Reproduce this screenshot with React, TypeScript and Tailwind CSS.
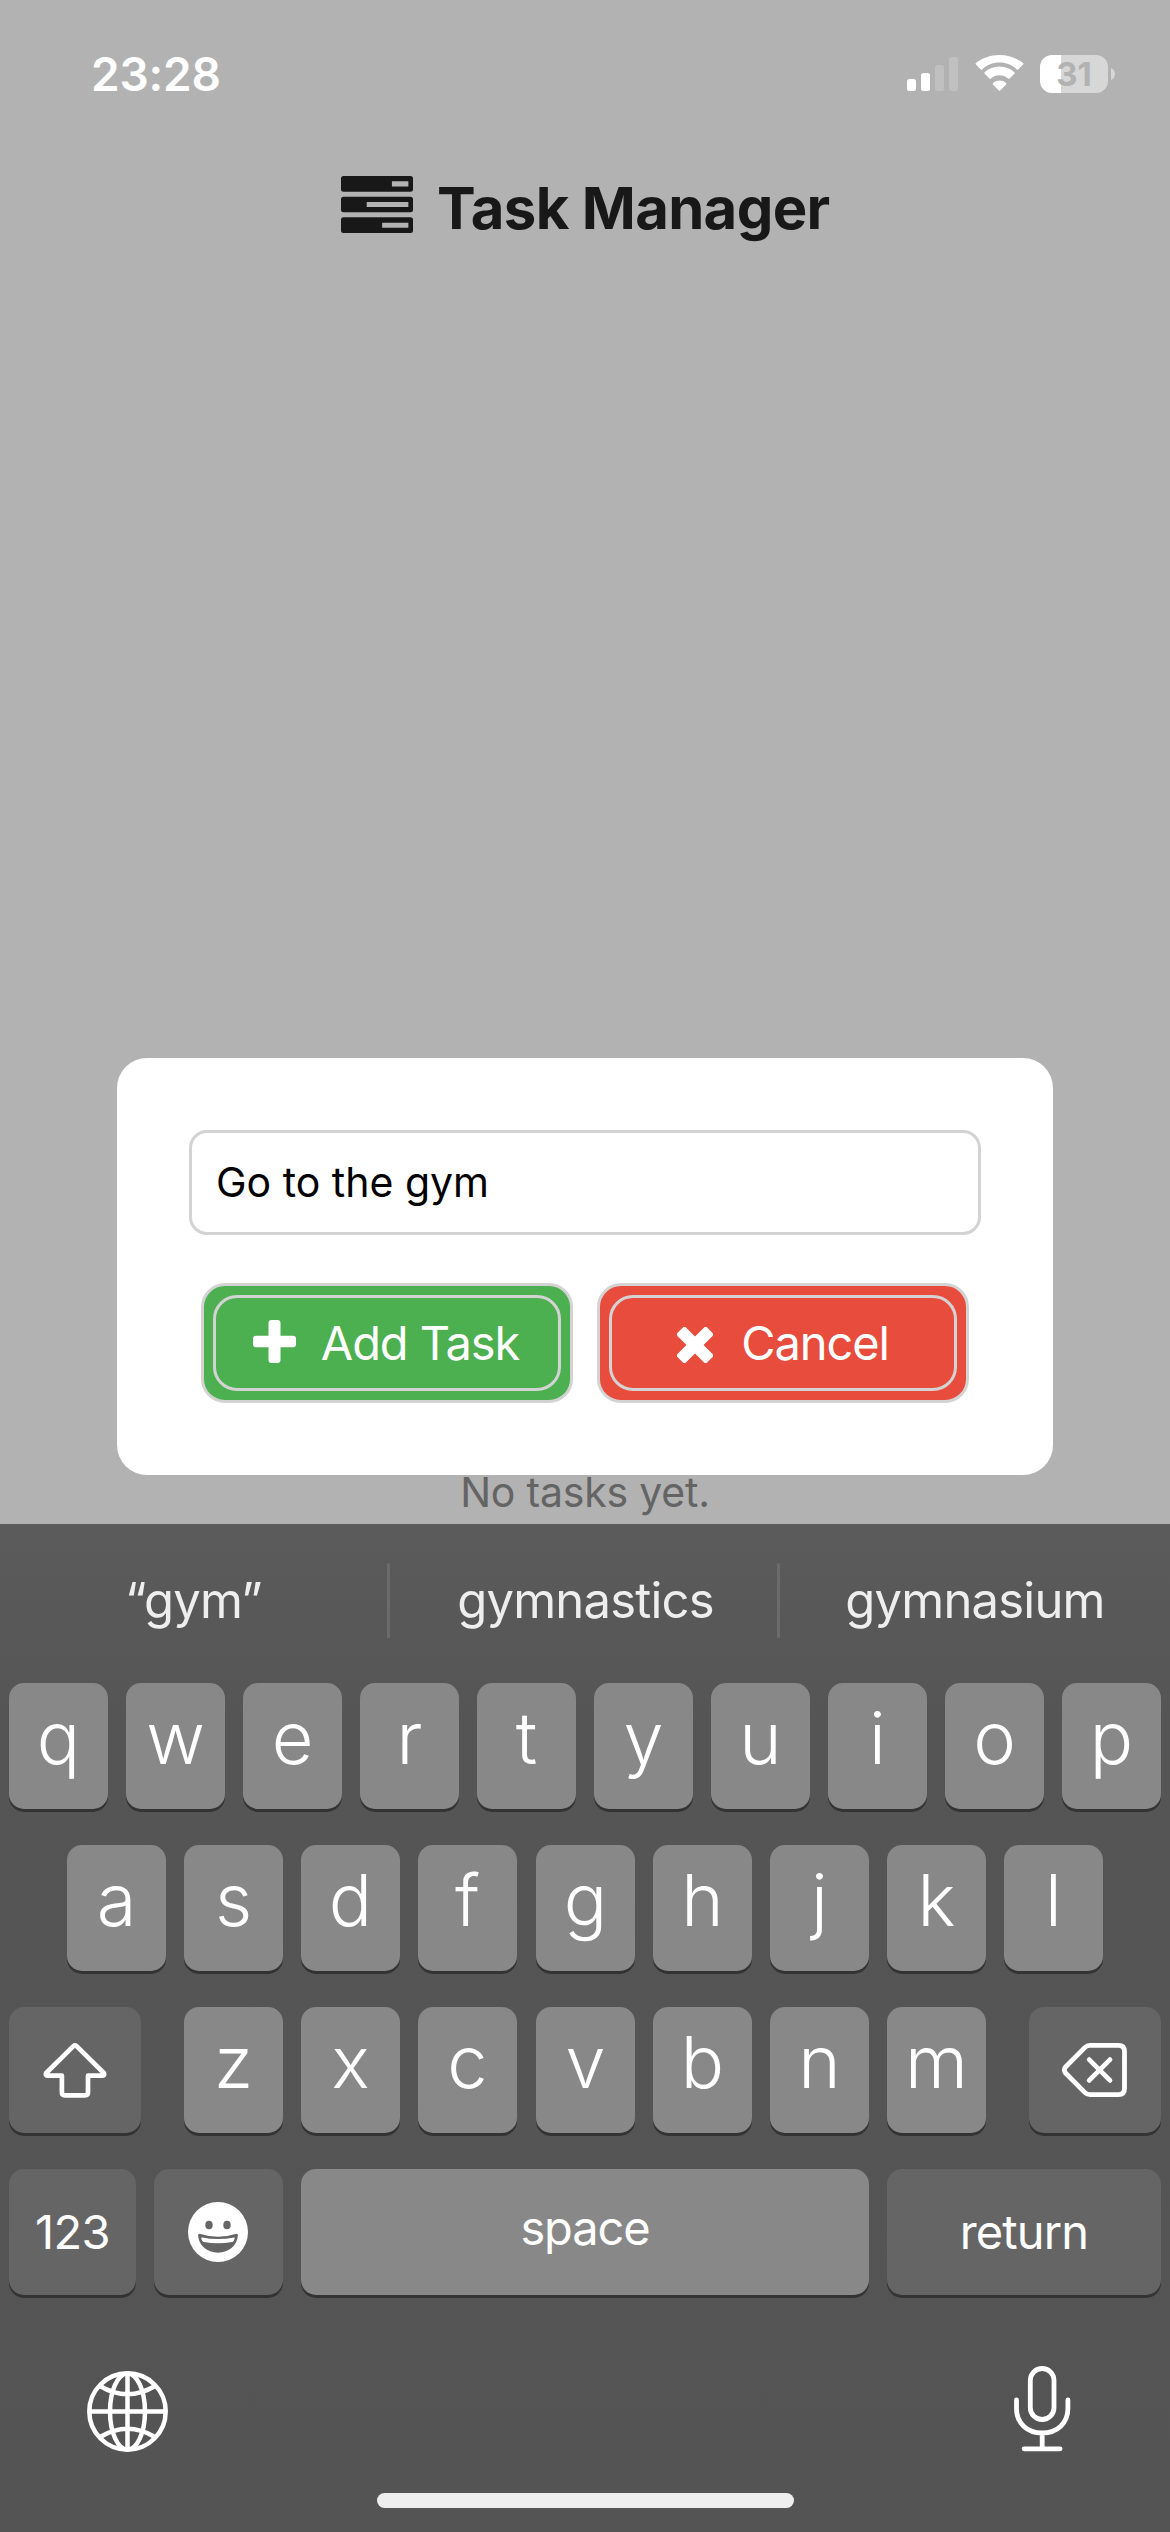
import React from "react";

const F = "font-['Inter',sans-serif]";

function T({ children, className = "" }: { children: React.ReactNode; className?: string }) {
  return <span className={"whitespace-nowrap " + className}>{children}</span>;
}

function StatusBar() {
  return (
    <div className="flex h-[141px] justify-between pl-[91px] pr-[55px] text-white">
      <T className="mt-[46px] text-[46px] leading-[56px] font-semibold tracking-[-0.2px]">23:28</T>
      <div className="mt-[55px] flex h-[38px] items-start">
        <svg width="51" height="36" viewBox="0 0 51 36" className="mr-[17px]">
          <rect x="0" y="24" width="9" height="12" rx="2.5" fill="#fff" />
          <rect x="14" y="18" width="9" height="18" rx="2.5" fill="#fff" />
          <rect x="28" y="10" width="9" height="26" rx="2.5" fill="#c0c0c0" />
          <rect x="42" y="2" width="9" height="34" rx="2.5" fill="#c0c0c0" />
        </svg>
        <svg width="49" height="36" viewBox="0 0 49 36" className="mr-[16px]" fill="#fff">
          <path d="M24.5 7.5c6.700 0 12.800 2.600 17.300 6.900c.4.4 1 .4 1.400 0l4.900-4.900c.4-.4.4-1 0-1.400C42 3.100 33.700 0 24.500 0S7 3.100.9 8.100c-.4.400-.4 1 0 1.400l4.900 4.900c.4.4 1 .4 1.400 0C11.700 10.100 17.800 7.500 24.500 7.500z" />
          <path d="M24.500 20.200c3.300 0 6.300 1.200 8.600 3.300c.4.4 1 .4 1.400 0l4.900-4.800c.4-.4.4-1.100 0-1.500c-3.900-3.600-9.200-5.700-14.900-5.700s-11 2.100-14.900 5.700c-.4.400-.4 1.100 0 1.500l4.900 4.800c.4.4 1 .4 1.400 0c2.300-2.100 5.300-3.300 8.600-3.300z" />
          <path d="M31.100 29.400c.4-.4.400-1.100 0-1.500a10.300 10.300 0 0 0-13.200 0c-.4.400-.4 1.100 0 1.500l5.900 6.200c.4.4 1 .4 1.400 0z" />
        </svg>
        <div className="flex h-[38px] w-[68px] items-center justify-center overflow-hidden rounded-[12px] bg-[linear-gradient(to_right,#fff_21px,#d7d7d7_21px)]">
          <T className="text-[33px] leading-[38px] font-bold text-[#b2b2b2]">31</T>
        </div>
        <svg width="4" height="12" viewBox="0 0 4 12" className="mt-[13px] ml-[3px]">
          <path d="M0 0c2.500 1 4 3.300 4 6s-1.500 5-4 6z" fill="#d7d7d7" />
        </svg>
      </div>
    </div>
  );
}

function Header() {
  return (
    <div className="flex h-[110px] items-start pl-[341px] text-[#181818]">
      <svg width="72" height="57" viewBox="0 0 70 57" preserveAspectRatio="none" className="mt-[35px]">
        <path
          fill="#181818"
          fillRule="evenodd"
          d="M2.500 0h65q2.500 0 2.500 2.500v10.700q0 2.500-2.500 2.500h-65q-2.500 0-2.500-2.500v-10.700q0-2.500 2.500-2.500zM49.500 5.300v5.200h16v-5.200zM2.500 20.700h65q2.500 0 2.500 2.500v10.600q0 2.500-2.500 2.500h-65q-2.500 0-2.500-2.500v-10.600q0-2.500 2.500-2.500zM25 26v5h40.500v-5zM2.500 41.300h65q2.500 0 2.500 2.500v10.700q0 2.500-2.500 2.500h-65q-2.500 0-2.500-2.500v-10.700q0-2.500 2.500-2.500zM40 46.700v5h25.500v-5z"
        />
      </svg>
      <T className="mt-[31px] ml-[24px] text-[58px] leading-[72px] font-bold tracking-[-0.65px]">Task Manager</T>
    </div>
  );
}

function ModalButton({ color, children }: { color: string; children: React.ReactNode }) {
  return (
    <div className={"h-[120px] w-[372px] rounded-[24px] border-[3px] border-[#d3d3d3] p-[9px] " + color}>
      <div className="flex h-[96px] w-[348px] items-center justify-center rounded-[24px] border-[3px] border-[#d3d3d3] text-[47px] leading-[56px] tracking-[-1.1px] text-white">
        {children}
      </div>
    </div>
  );
}

function Modal() {
  return (
    <div className="mx-[117px] h-[417px] rounded-[30px] bg-white px-[72px] pt-[72px]">
      <div className="flex h-[105px] items-center rounded-[18px] border-[3px] border-[#d3d3d3] pl-[24px] text-[41px] text-black">
        <T>Go to the gym</T>
      </div>
      <div className="mt-[48px] flex justify-center gap-[24px]">
        <ModalButton color="bg-[#4caf50]">
          <svg width="43" height="43" viewBox="0 0 43 43" className="mr-[25px] mb-[4px] -ml-[2px]" fill="#fff">
            <rect x="0" y="15.700" width="43" height="11.600" rx="3" />
            <rect x="15.500" y="0" width="12" height="43" rx="3" />
          </svg>
          <T>Add Task</T>
        </ModalButton>
        <ModalButton color="bg-[#e74c3c]">
          <svg width="36" height="36" viewBox="0 0 36 36" className="mt-[3px] mr-[28px]" fill="#fff">
            <rect x="-3" y="12" width="42" height="12" rx="2.500" transform="rotate(45 18 18)" />
            <rect x="-3" y="12" width="42" height="12" rx="2.500" transform="rotate(-45 18 18)" />
          </svg>
          <T>Cancel</T>
        </ModalButton>
      </div>
    </div>
  );
}

const KEY = "flex h-[126px] shrink-0 justify-center rounded-[15px] shadow-[0_3px_0_#333] text-white ";

function Letter({ c, nudge = false }: { c: string; nudge?: boolean }) {
  return (
    <div className={KEY + "w-[99px] bg-[#888]" + (nudge ? " ml-px" : "")}>
      <T className="mt-[10px] text-[72px] leading-[90px] font-[350]">{c}</T>
    </div>
  );
}

function Keyboard() {
  return (
    <div className="h-[1008px] bg-[linear-gradient(to_bottom,#5b5b5b,#555_200px,#545454)]">
      <div className="flex h-[159px] text-[49px] leading-[60px] tracking-[-0.8px] text-[#eee]">
        <div className="flex w-[387px] justify-center pt-[47px]"><T>“gym”</T></div>
        <div className="mt-[39px] h-[75px] w-[3px] rounded-full bg-[#6b6b6b]" />
        <div className="flex w-[387px] justify-center pt-[47px] pl-[4px]"><T>gymnastics</T></div>
        <div className="mt-[39px] h-[75px] w-[3px] rounded-full bg-[#6b6b6b]" />
        <div className="flex flex-1 justify-center pt-[47px]"><T>gymnasium</T></div>
      </div>
      <div className="flex flex-col gap-[36px] px-[9px]">
        <div className="flex gap-[18px]">{"qwertyuiop".split("").map((c) => <Letter key={c} c={c} />)}</div>
        <div className="flex gap-[18px] pl-[58px]">{"asdfghjkl".split("").map((c) => <Letter key={c} c={c} nudge={c === "g"} />)}</div>
        <div className="flex justify-between">
          <div className={KEY + "w-[132px] items-center bg-[#656565]"}>
            <svg width="64" height="55" viewBox="0 0 64 55" className="mr-px" fill="none" stroke="#fff" strokeWidth="4.700" strokeLinejoin="round">
              <path d="M30.400 3.200q1.600-1.400 3.200 0L60.800 30q1.200 2.700-1.300 2.700H45v16.600q0 3-3 3H21.900q-3 0-3-3V32.700H4.500q-2.500 0-1.300-2.700z" />
            </svg>
          </div>
          <div className="flex gap-[18px]">{"zxcvbnm".split("").map((c) => <Letter key={c} c={c} nudge={c === "v"} />)}</div>
          <div className={KEY + "w-[132px] items-center bg-[#656565]"}>
            <svg width="66" height="54" viewBox="0 0 66 54" fill="none" stroke="#fff" strokeWidth="4.800" strokeLinejoin="round" strokeLinecap="round">
              <path d="M28 2.400h28.500q6 0 6 6v37.200q0 6-6 6H28q-3 0-5-2L3.500 30q-2.200-3 0-6L23 4.400q2-2 5-2z" />
              <path d="M27.200 16.600l20.800 20.800M48 16.600l-20.800 20.800" />
            </svg>
          </div>
        </div>
        <div className="flex gap-[18px] text-[47px] leading-[58px]">
          <div className={KEY + "w-[127px] bg-[#656565] pt-[34px]"}><T className="tracking-[-0.6px]">123</T></div>
          <div className={KEY + "w-[129px] items-center bg-[#656565]"}>
            <svg width="60" height="60" viewBox="0 0 60 60" className="mr-px">
              <circle cx="30" cy="30" r="30" fill="#fff" />
              <ellipse cx="21" cy="23" rx="3.700" ry="4.300" fill="#656565" />
              <ellipse cx="39" cy="23" rx="3.700" ry="4.300" fill="#656565" />
              <path d="M11.500 31.800q18.500 6 37 0q1.500-.2 1.400 1.500C49.300 43.500 41 50.700 30 50.700S10.700 43.500 10.100 33.300q-.1-1.700 1.400-1.500z" fill="#656565" />
              <path d="M14 35.500q16 3.200 32 0q1-.1.800.8l-1 2.400q-.4 1-1.500 1.200q-14.300 2.800-28.600 0q-1.100-.2-1.500-1.200l-1-2.400q-.2-.9.800-.8z" fill="#fff" />
            </svg>
          </div>
          <div className={KEY + "w-[568px] bg-[#888] pt-[30px]"}><T className="tracking-[-1.1px]">space</T></div>
          <div className={KEY + "w-[274px] bg-[#656565] pt-[34px]"}><T className="tracking-[-0.9px]">return</T></div>
        </div>
      </div>
      <div className="flex items-start justify-between pt-[71px] pr-[99px] pl-[87px]">
        <svg width="81" height="81" viewBox="0 0 81 81" fill="none" stroke="#fff" strokeWidth="4.500" className="mt-[5px]">
          <circle cx="40.500" cy="40.500" r="38.200" />
          <ellipse cx="40.500" cy="40.500" rx="17.500" ry="38" />
          <path d="M40.500 2.500v76M2.500 40.500h76M13 15q27.500 16.500 55 0M13 66q27.500-16.500 55 0" />
        </svg>
        <svg width="57" height="86" viewBox="0 0 57 86" fill="none" stroke="#fff" strokeWidth="4.800" strokeLinecap="round">
          <rect x="16.300" y="2.500" width="23.700" height="51" rx="11.850" />
          <path d="M2.500 34v8.500C2.500 57 13 67 28.200 67S53.900 57 53.900 42.500V34M28.200 67v15.500M10.100 82.800h36" />
        </svg>
      </div>
      <div className="mx-auto mt-[41px] h-[15px] w-[417px] rounded-full bg-[#eee]" />
    </div>
  );
}

export default function App() {
  return (
    <div className={"flex h-[2532px] w-[1170px] flex-col overflow-hidden bg-[#b2b2b2] " + F}>
      <StatusBar />
      <Header />
      <div className="h-[807px] shrink-0" />
      <Modal />
      <div className="flex h-[49px] shrink-0 justify-center text-[41px] leading-[34px] tracking-[-0.2px] text-[#646464]">
        <T>No tasks yet.</T>
      </div>
      <Keyboard />
    </div>
  );
}
